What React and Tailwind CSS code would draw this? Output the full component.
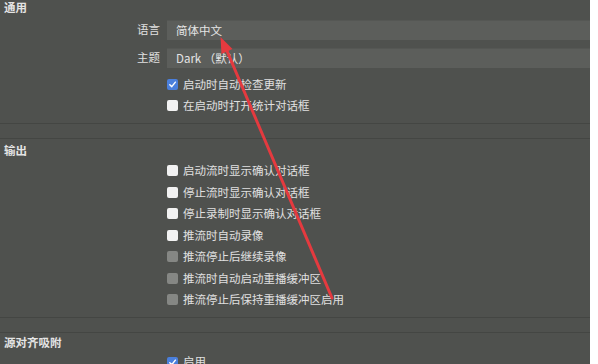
import React from 'react';

const FONT = { fontFamily: '"Noto Sans CJK SC", "Noto Sans", sans-serif' };

function Box({ state }) {
  if (state === 'checked') {
    return (
      <span className="w-[11px] h-[11px] rounded-[2px] bg-[#4a7fdc] flex items-center justify-center shrink-0">
        <svg width="9" height="9" viewBox="0 0 10 10" fill="none">
          <path d="M2 5.2 L4.2 7.4 L8.2 2.4" stroke="white" strokeWidth="1.6" strokeLinecap="round" strokeLinejoin="round" />
        </svg>
      </span>
    );
  }
  if (state === 'disabled') {
    return <span className="w-[11px] h-[11px] rounded-[2px] bg-[#858784] shrink-0" />;
  }
  return <span className="w-[11px] h-[11px] rounded-[2px] bg-[#f2f2f2] shrink-0" />;
}

function CheckRow({ state, label, h = 'h-[21px]' }) {
  return (
    <div className={`${h} flex items-center pl-[167px] gap-[5px]`}>
      <Box state={state} />
      <span className="text-[11.5px] leading-none text-[#e0e0e0]">{label}</span>
    </div>
  );
}

function Field({ label, value }) {
  return (
    <div className="flex items-center h-[20px]">
      <div className="w-[160px] text-right text-[11.5px] leading-none text-[#e0e0e0]">{label}</div>
      <div className="ml-[7px] flex-1 h-full bg-[#5c5e5b] border-t border-[#555754] flex items-center pl-[9px] text-[11.5px] leading-none text-[#e4e4e4]">
        {value}
      </div>
    </div>
  );
}

function Header({ children, className = '' }) {
  return (
    <div className={`h-[16px] flex items-center pl-[4px] text-[11.5px] font-bold text-[#e4e4e4] ${className}`}>
      {children}
    </div>
  );
}

function Divider({ className = '' }) {
  return (
    <div className={`border-t border-b border-[#444643] h-[16px] ${className}`} />
  );
}

export default function App() {
  const output = [
    ['unchecked', '启动流时显示确认对话框'],
    ['unchecked', '停止流时显示确认对话框'],
    ['unchecked', '停止录制时显示确认对话框'],
    ['unchecked', '推流时自动录像'],
    ['disabled', '推流停止后继续录像'],
    ['disabled', '推流时自动启动重播缓冲区'],
    ['disabled', '推流停止后保持重播缓冲区启用'],
  ];

  return (
    <div className="w-[598px] h-[364px] bg-white overflow-hidden" style={FONT}>
      <div className="relative w-[590px] h-[364px] bg-[#4f514e] overflow-hidden">
        <Header>通用</Header>
        <div className="mt-[4px] flex flex-col gap-[8px]">
          <Field label="语言" value="简体中文" />
          <Field label="主题" value="Dark （默认）" />
        </div>
        <div className="mt-[6px]">
          <CheckRow state="checked" label="启动时自动检查更新" />
          <CheckRow state="unchecked" label="在启动时打开统计对话框" />
        </div>
        <Divider className="mt-[7px]" />

        <Header className="mt-[4px]">输出</Header>
        <div className="mt-[1px]">
          {output.map(([s, l]) => (
            <CheckRow key={l} state={s} label={l} h="h-[21.5px]" />
          ))}
        </div>
        <Divider className="mt-[6px]" />

        <Header className="mt-[2px]">源对齐吸附</Header>
        <div className="mt-[1px]">
          <CheckRow state="checked" label="启用" />
        </div>

        <svg className="absolute left-0 top-0 pointer-events-none" width="590" height="364" viewBox="0 0 590 364">
          <line x1="332" y1="298" x2="227" y2="51" stroke="#e43a3f" strokeWidth="3" strokeLinecap="round" />
          <polygon points="220.5,37 232.5,49 221.5,54" fill="#e43a3f" />
        </svg>
      </div>
    </div>
  );
}
